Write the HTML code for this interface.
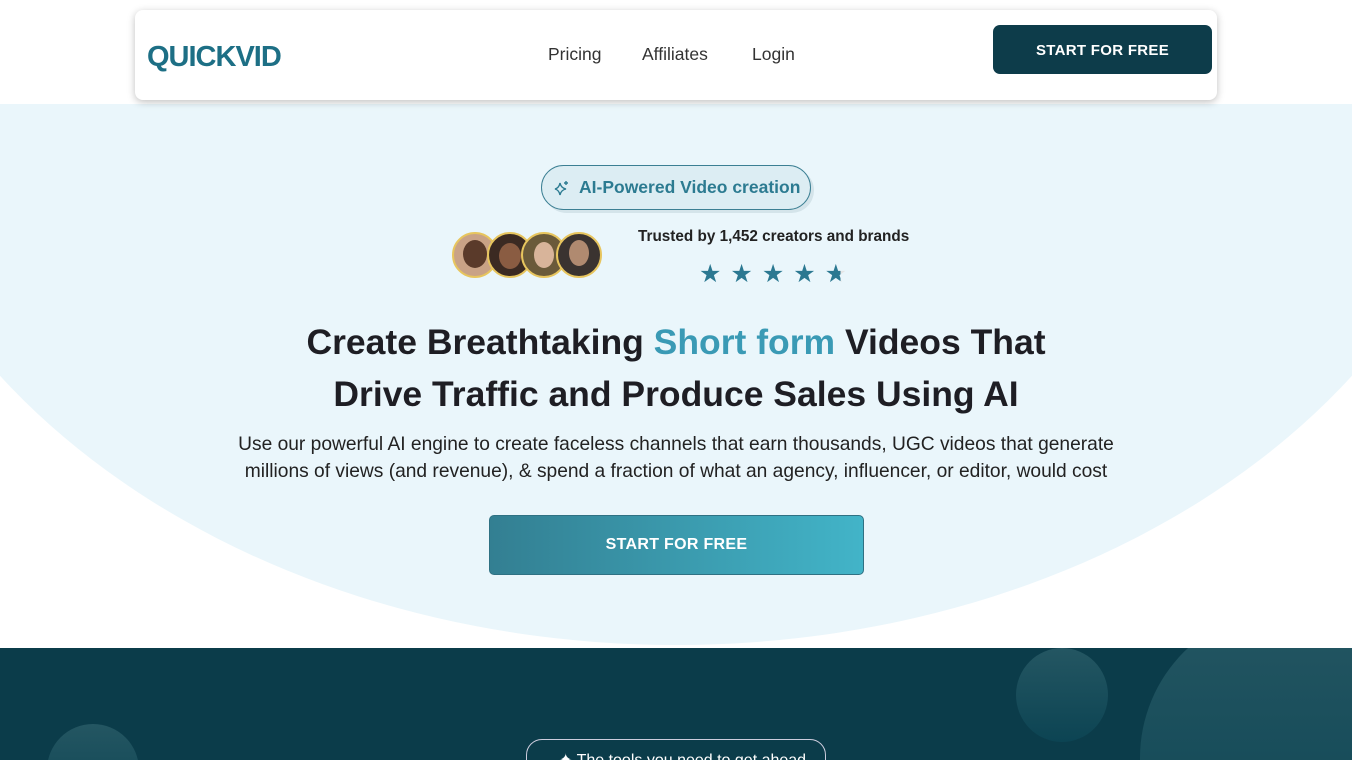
<!DOCTYPE html>
<html><head><meta charset="utf-8"><style>
*{margin:0;padding:0;box-sizing:border-box}
html,body{width:1352px;height:760px;overflow:hidden}
body{background:#fff;font-family:"Liberation Sans",sans-serif;position:relative}
.blob{position:absolute;left:-150px;top:-621px;width:1652px;height:1266px;border-radius:50%;background:#eaf6fb}
.clipw{position:absolute;left:0;top:0;width:1352px;height:104px;background:#fff}
.nav{position:absolute;left:135px;top:10px;width:1082px;height:90px;background:#fff;border-radius:8px;box-shadow:0 2px 8px rgba(0,0,0,.25)}
.logo{position:absolute;left:12px;top:31px;font-size:29px;font-weight:bold;color:#1d6f85;letter-spacing:-1px}
.links{position:absolute;left:0;top:34px;font-size:17.5px;color:#333}
.links span{position:absolute;white-space:nowrap}
.btn1{position:absolute;left:858px;top:15px;width:219px;height:49px;background:#0d3c4a;border-radius:7px;color:#fff;font-weight:bold;font-size:15px;text-align:center;line-height:51px;letter-spacing:.3px}
.pill{position:absolute;left:541px;top:165px;width:270px;height:45px;border:1.5px solid #3b7f93;border-radius:23px;background:#dcedf3;box-shadow:3px 3px 0 #d4e4ea;color:#2c7b91;font-weight:bold;font-size:17.5px;line-height:42px;padding-left:37px;white-space:nowrap}
.av{position:absolute;top:232px;width:46px;height:46px;border-radius:50%;border:2px solid #e7c55e;overflow:hidden}
.trust{position:absolute;left:638px;top:228px;font-size:15.3px;font-weight:bold;color:#222;white-space:nowrap}
.stars{position:absolute;left:699px;top:259px;font-size:25px;color:#2b7891;letter-spacing:9px}
h1{position:absolute;left:0;width:1352px;top:316px;text-align:center;font-size:35.5px;line-height:52px;color:#1e1e24;font-weight:bold}
h1 b{color:#3a9ab5}
.p{position:absolute;left:0;width:1352px;top:431px;text-align:center;font-size:19.2px;line-height:27px;color:#222}
.btn2{position:absolute;left:489px;top:515px;width:375px;height:60px;border-radius:5px;background:linear-gradient(90deg,#337f92,#42b4c8);color:#fff;font-weight:bold;font-size:16px;text-align:center;line-height:58px;border:1px solid #2f7183;letter-spacing:.3px}
.dark{position:absolute;left:0;top:648px;width:1352px;height:112px;background:#0b3c4a;overflow:hidden}
.c{position:absolute;border-radius:50%;background:linear-gradient(#245662,#0c4453)}
.tag{position:absolute;left:526px;top:91px;width:300px;height:50px;border:1.5px solid #ccd;border-radius:16px;color:#fff;font-size:16px;padding:10px 0 0 32px;white-space:nowrap}
</style></head><body>
<div class="blob"></div><div class="clipw"></div>
<div class="nav">
<div class="logo">QUICKVID</div>
<div class="links"><span style="left:413px">Pricing</span><span style="left:507px">Affiliates</span><span style="left:617px">Login</span></div>
<div class="btn1">START FOR FREE</div>
</div>
<div class="pill"><svg style="position:absolute;left:12px;top:14px" width="16" height="16" viewBox="0 0 16 16" fill="none" stroke="#2c7b91" stroke-width="1.4"><path d="M6 3 Q7 8 12 9 Q7 10 6 15 Q5 10 1 9 Q5 8 6 3Z"/><path d="M12 1v4M10 3h4"/></svg>AI-Powered Video creation</div>
<div class="av" style="left:452px;background:#c9a286"><div style="width:24px;height:28px;background:#5a3a2a;border-radius:50%;margin:6px auto"></div></div>
<div class="av" style="left:487px;background:#3b2a22"><div style="width:22px;height:26px;background:#8a5c42;border-radius:50%;margin:9px auto"></div></div>
<div class="av" style="left:521px;background:#6a5a3a"><div style="width:20px;height:26px;background:#d8b49a;border-radius:50%;margin:8px auto"></div></div>
<div class="av" style="left:556px;background:#3a3330"><div style="width:20px;height:26px;background:#b08a70;border-radius:50%;margin:6px auto"></div></div>
<div class="trust">Trusted by 1,452 creators and brands</div>
<div class="stars">★★★★<span style="background:linear-gradient(90deg,#2b7891 50%,#e5e5e5 50%);-webkit-background-clip:text;color:transparent">★</span></div>
<h1>Create Breathtaking <b>Short form</b> Videos That<br>Drive Traffic and Produce Sales Using AI</h1>
<div class="p">Use our powerful AI engine to create faceless channels that earn thousands, UGC videos that generate<br>millions of views (and revenue), &amp; spend a fraction of what an agency, influencer, or editor, would cost</div>
<div class="btn2">START FOR FREE</div>
<div class="dark">
<div class="c" style="left:1016px;top:0;width:92px;height:94px"></div>
<div class="c" style="left:1140px;top:-40px;width:300px;height:300px"></div>
<div class="c" style="left:47px;top:76px;width:92px;height:92px"></div>
<div class="tag">✦ The tools you need to get ahead</div>
</div>
</body></html>
